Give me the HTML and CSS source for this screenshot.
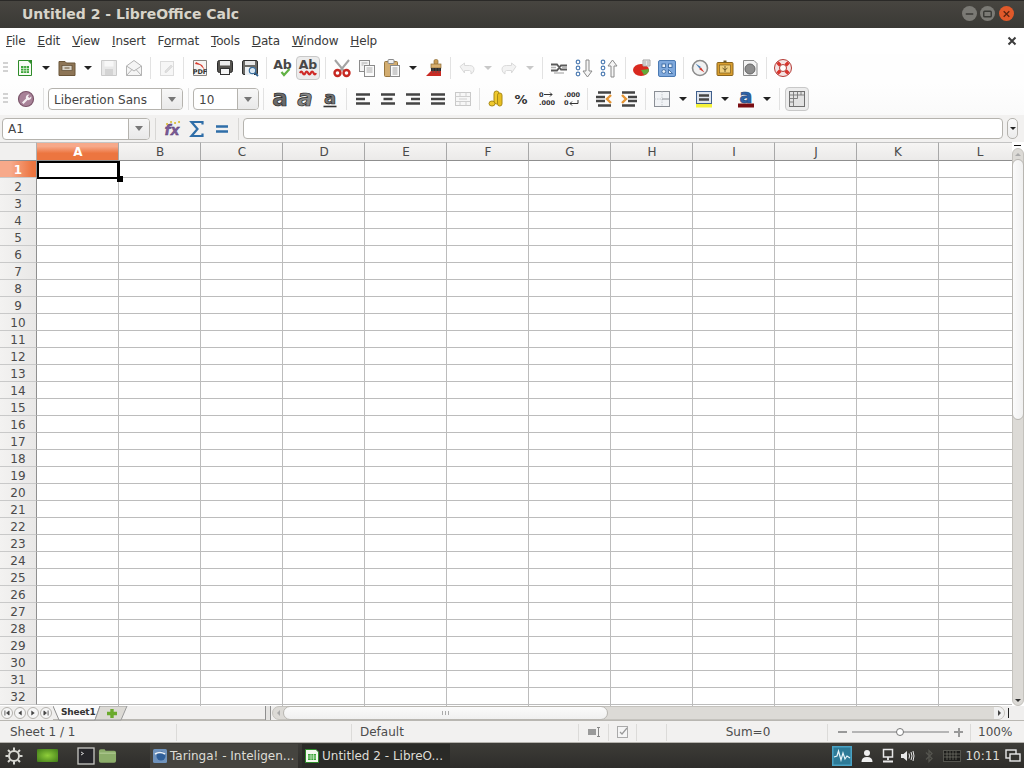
FILE: index.html
```html
<!DOCTYPE html>
<html lang="en">
<head>
    <meta charset="UTF-8">
    <title>Untitled 2 - LibreOffice Calc</title>
    <link rel="stylesheet" href="styles.css">
</head>
<body>

<div class="app">

    <!-- window title -->
    <div class="titlebar">
        <span class="title-text">Untitled 2 - LibreOffice Calc</span>
        <div class="win-buttons">
            <span class="win-btn"><svg width="16" height="16" viewBox="0 0 16 16"><path d="M4 8h8" stroke="#3a3a36" stroke-width="1.6"/></svg></span>
            <span class="win-btn"><svg width="16" height="16" viewBox="0 0 16 16"><rect x="4" y="5" width="8" height="6" rx="1" fill="none" stroke="#3a3a36" stroke-width="1.5"/></svg></span>
            <span class="win-btn win-close"><svg width="16" height="16" viewBox="0 0 16 16"><path d="M5 5l6 6M11 5l-6 6" stroke="#5a2410" stroke-width="1.4"/></svg></span>
        </div>
    </div>

    <!-- menu -->
    <div class="menubar">
        <span class="menu-item"><u>F</u>ile</span>
        <span class="menu-item"><u>E</u>dit</span>
        <span class="menu-item"><u>V</u>iew</span>
        <span class="menu-item"><u>I</u>nsert</span>
        <span class="menu-item">F<u>o</u>rmat</span>
        <span class="menu-item"><u>T</u>ools</span>
        <span class="menu-item"><u>D</u>ata</span>
        <span class="menu-item"><u>W</u>indow</span>
        <span class="menu-item"><u>H</u>elp</span>
        <svg class="menu-close" width="10" height="10" viewBox="0 0 10 10"><path d="M1.5 1.5l7 7M8.5 1.5l-7 7" stroke="#3c3c3c" stroke-width="2"/></svg>
    </div>

    <!-- standard toolbar -->
    <div class="toolbar toolbar-one">
        <span class="grip"></span>
        <span class="tool"><svg class="ic" viewBox="0 0 22 22"><path d="M4.5 3.500H14L17.500 7V18.500H4.500Z" fill="#f7fbf4" stroke="#2e8b2a"/><path d="M13.500 3L18 7.500V3Z" fill="#2e8b2a"/><rect x="7" y="9" width="8" height="7" fill="#3ba53a"/><path d="M7 11.500h8M7 13.800h8M9.700 9v7M12.400 9v7" stroke="#e6f5e0" stroke-width=".7"/></svg></span>
        <span class="arrow"></span>
        <span class="tool"><svg class="ic" viewBox="0 0 22 22"><path d="M3 4.500h6l1.500 1.500H19V18.500H3Z" fill="#8d7556" stroke="#6b5639"/><rect x="6" y="8.500" width="10" height="5" fill="#d8d3c8" stroke="#5e4c33" stroke-width=".7"/><path d="M8.500 11h5" stroke="#6b5639"/></svg></span>
        <span class="arrow"></span>
        <span class="tool"><svg class="ic" viewBox="0 0 22 22"><path d="M3.500 3.500H18.500V18.500H3.500Z" fill="#e8e8e8" stroke="#cacaca"/><rect x="6.500" y="4" width="9" height="5.500" fill="#f7f7f7"/><rect x="7" y="12" width="8" height="6" fill="#d4d4d4"/></svg></span>
        <span class="tool"><svg class="ic" viewBox="0 0 22 22"><path d="M3.500 9L11 3.500 18.500 9V18.500H3.500Z" fill="#f5f5f5" stroke="#b3b3b3"/><path d="M3.500 9L11 14l7.500-5M3.500 18.500L9 12.500M18.500 18.500L13 12.500" fill="none" stroke="#b3b3b3"/></svg></span>
        <span class="sep"></span>
        <span class="tool"><svg class="ic" viewBox="0 0 22 22"><rect x="4.500" y="4.500" width="13" height="14" fill="#f6f6f6" stroke="#dcdcdc"/><path d="M9 14l6-6 1.500 1.500-6 6H9Z" fill="#dedede" stroke="#cfcfcf" stroke-width=".5"/></svg></span>
        <span class="sep"></span>
        <span class="tool"><svg class="ic" viewBox="0 0 22 22"><path d="M4.500 3.500H17.500V18.500H4.500Z" fill="#f6f4f2" stroke="#8a8580"/><path d="M7 5l6 3 3 5-5-5-5-1Z" fill="#d8382a"/><text class="ic-pdf" x="11" y="17">PDF</text></svg></span>
        <span class="tool"><svg class="ic" viewBox="0 0 22 22"><rect x="3.500" y="3.500" width="15" height="12" rx="2" fill="#55534f" stroke="#2a2a2a"/><rect x="6" y="4" width="10" height="4.500" fill="#ececec"/><rect x="6.500" y="11.500" width="9" height="6" fill="#f5f5f5" stroke="#333"/></svg></span>
        <span class="tool"><svg class="ic" viewBox="0 0 22 22"><rect x="3.500" y="3.500" width="15" height="14" rx="1.500" fill="#6b6a66" stroke="#2f2f2f"/><rect x="6" y="4" width="10" height="4" fill="#e7e7e7"/><rect x="6" y="10" width="9" height="8" fill="#eef2f5"/><circle cx="13.500" cy="13.500" r="3.200" fill="#dbe8f3" stroke="#3b6f9e" stroke-width="1.200"/><path d="M16 16l3 3" stroke="#2f5f8c" stroke-width="1.800"/></svg></span>
        <span class="sep"></span>
        <span class="tool"><svg class="ic" viewBox="0 0 22 22"><text class="ic-ab" x="10.500" y="12">Ab</text><path d="M9.500 15l2.500 3 5.500-6" fill="none" stroke="#62b245" stroke-width="2.200"/></svg></span>
        <span class="tool tool-on"><svg class="ic" viewBox="0 0 22 22"><text class="ic-ab" x="11" y="12">Ab</text><path d="M3 16q1.300-3 2.700 0t2.700 0 2.700 0 2.700 0 2.700 0 2.400 0" fill="none" stroke="#cf2a27" stroke-width="2.200"/></svg></span>
        <span class="sep"></span>
        <span class="tool"><svg class="ic" viewBox="0 0 22 22"><path d="M4 3l9 11M18 3L9 14" stroke="#a3a3a3" stroke-width="2"/><circle cx="6.500" cy="16" r="3" fill="none" stroke="#c62821" stroke-width="2.400"/><circle cx="15.500" cy="16" r="3" fill="none" stroke="#c62821" stroke-width="2.400"/></svg></span>
        <span class="tool"><svg class="ic" viewBox="0 0 22 22"><rect x="3.500" y="3.500" width="10" height="11" fill="#f4f4f4" stroke="#8b8b8b"/><rect x="8.500" y="8.500" width="10" height="11" fill="#fbfbfb" stroke="#8b8b8b"/><path d="M5.500 6h6M5.500 8h2M10.500 11h6M10.500 13h6M10.500 15h6" stroke="#9a9a9a" stroke-width=".8"/></svg></span>
        <span class="tool"><svg class="ic" viewBox="0 0 22 22"><rect x="3.500" y="4.500" width="13" height="15" rx="1" fill="#d3ad70" stroke="#97763f"/><rect x="7" y="2.500" width="6" height="4" rx="1" fill="#f0f0f0" stroke="#8a8a8a"/><rect x="9.500" y="8.500" width="9" height="11" fill="#fbfbfb" stroke="#8b8b8b"/><path d="M11.500 11h5M11.500 13h5M11.500 15h5M11.500 17h5" stroke="#8b8b8b" stroke-width=".8"/></svg></span>
        <span class="arrow"></span>
        <span class="tool"><svg class="ic" viewBox="0 0 22 22"><g transform="translate(1 0)"><rect x="10" y="2.500" width="4" height="5" rx="1.500" fill="#c89b55" stroke="#8c6c35" stroke-width=".7"/><rect x="7" y="7" width="10" height="4" fill="#d9b070" stroke="#8c6c35" stroke-width=".7"/><path d="M7 11h10V18H7Z" fill="#2b2b2b"/><path d="M7 14l-5 5h15v-5Z" fill="#c92a23"/><path d="M9 11v5M12 11v5M15 11v5" stroke="#555" stroke-width=".8"/></g></svg></span>
        <span class="sep"></span>
        <span class="tool"><svg class="ic" viewBox="0 0 22 22"><path d="M4 9.500L8.500 6v2.500h5q4.500 0 4.500 4 0 3-3 4.500 1-3-1.500-3.500h-5V16Z" fill="#f3f3f3" stroke="#dadada"/></svg></span>
        <span class="arrow arrow-off"></span>
        <span class="tool"><svg class="ic" viewBox="0 0 22 22"><path d="M18 9.500L13.500 6v2.500h-5q-4.500 0-4.500 4 0 3 3 4.500-1-3 1.500-3.500h5V16Z" fill="#f3f3f3" stroke="#dadada"/></svg></span>
        <span class="arrow arrow-off"></span>
        <span class="sep"></span>
        <span class="tool"><svg class="ic" viewBox="0 0 22 22"><path d="M3 7.500h6l4 5h6M3 13.500h6l4-5h6" fill="none" stroke="#5a5a5a" stroke-width="1.800"/><path d="M3 10.500h5M14 10.500h5" stroke="#b5b5b5" stroke-width="1.500"/><path d="M6 16h10" stroke="#9a9a9a"/></svg></span>
        <span class="tool"><svg class="ic" viewBox="0 0 22 22"><circle cx="5" cy="5" r="1.800" fill="#fff" stroke="#4f7db3" stroke-width="1.200"/><circle cx="5" cy="11" r="1.800" fill="#fff" stroke="#4f7db3" stroke-width="1.200"/><circle cx="5" cy="17" r="1.800" fill="#fff" stroke="#4f7db3" stroke-width="1.200"/><path d="M13 3h3v11h3l-4.500 6L10 14h3Z" fill="#f5f5f5" stroke="#8a8a8a"/></svg></span>
        <span class="tool"><svg class="ic" viewBox="0 0 22 22"><circle cx="5" cy="5" r="1.800" fill="#fff" stroke="#4f7db3" stroke-width="1.200"/><circle cx="5" cy="11" r="1.800" fill="#fff" stroke="#4f7db3" stroke-width="1.200"/><circle cx="5" cy="17" r="1.800" fill="#fff" stroke="#4f7db3" stroke-width="1.200"/><path d="M13 20h3V9h3l-4.500-6L10 9h3Z" fill="#f5f5f5" stroke="#8a8a8a"/></svg></span>
        <span class="sep"></span>
        <span class="tool"><svg class="ic" viewBox="0 0 22 22"><ellipse cx="10" cy="13" rx="8" ry="6" fill="#d9291f"/><path d="M10 13l8-1a8 6 0 0 1-5 6Z" fill="#62a93a"/><path d="M12 3h7v6h-7Z" fill="#e6e6e6" stroke="#a5a5a5"/><path d="M13.500 5h1M16.500 5h1M13.500 7h1M16.500 7h1" stroke="#7a7a7a"/></svg></span>
        <span class="tool"><svg class="ic" viewBox="0 0 22 22"><rect x="2.500" y="3.500" width="17" height="16" rx="1.500" fill="#7ea8dc" stroke="#4b7ab3"/><rect x="6" y="7" width="3.500" height="3.500" fill="#eaf2fb" stroke="#2f5f99" stroke-width=".8"/><rect x="12.500" y="7" width="3.500" height="3.500" fill="#eaf2fb" stroke="#2f5f99" stroke-width=".8"/><circle cx="7.800" cy="14.500" r="1.900" fill="#eaf2fb" stroke="#2f5f99" stroke-width=".8"/><path d="M12.500 12.500v4h4Z" fill="#eaf2fb" stroke="#2f5f99" stroke-width=".8"/></svg></span>
        <span class="sep"></span>
        <span class="tool"><svg class="ic" viewBox="0 0 22 22"><circle cx="11" cy="11" r="7.500" fill="#f1f1f1" stroke="#8b8b8b" stroke-width="1.600"/><path d="M6.500 6.500l5.500 3.500-1.500 1.500Z" fill="#4a7fb5"/><path d="M15.500 15.500L10 12l2-1.500Z" fill="#d4352b"/></svg></span>
        <span class="tool"><svg class="ic" viewBox="0 0 22 22"><rect x="3" y="5.500" width="16" height="13" rx="1" fill="#d99e2f" stroke="#8a641c"/><rect x="5.500" y="8" width="11" height="8" fill="#efcf7e" stroke="#7c5c1e" stroke-width=".7"/><path d="M11 9v6M8.500 11l2.500 2 2.500-2" fill="none" stroke="#6e5a2b"/><path d="M9.500 3.500h3v2h-3Z" fill="#6e5a2b"/></svg></span>
        <span class="tool"><svg class="ic" viewBox="0 0 22 22"><path d="M4.500 3.500H15L18 6.500V18.500H4.500Z" fill="#f3f3f3" stroke="#8b8b8b"/><ellipse cx="11" cy="12" rx="5" ry="5" fill="#8e8e8e" stroke="#666"/></svg></span>
        <span class="sep"></span>
        <span class="tool"><svg class="ic" viewBox="0 0 22 22"><circle cx="11" cy="11" r="6" fill="none" stroke="#f4e3e3" stroke-width="5"/><path d="M5.500 5.500l3 3M16.500 5.500l-3 3M5.500 16.500l3-3M16.500 16.500l-3-3" stroke="#d8352d" stroke-width="3.400"/><circle cx="11" cy="11" r="8.500" fill="none" stroke="#b33a35"/><circle cx="11" cy="11" r="3.500" fill="#fff" stroke="#b33a35"/></svg></span>
    </div>

    <!-- formatting toolbar -->
    <div class="toolbar toolbar-two">
        <span class="grip grip-two"></span>
        <span class="tool"><svg class="ic" viewBox="0 0 22 22"><circle cx="11" cy="11" r="7.500" fill="#a88298" stroke="#7a5469" stroke-width="1.200"/><path d="M14.500 6.500a3 3 0 0 0-3.500 4L7 14.500l1.500 1.500 4-4a3 3 0 0 0 3.800-3.500l-2 1.500-1.500-1.500Z" fill="#f5eff2"/></svg></span>
        <span class="sep sep-thin"></span>
        <div class="combo combo-font">
            <span class="combo-text">Liberation Sans</span>
            <span class="combo-btn"></span>
        </div>
        <span class="sep sep-wide"></span>
        <div class="combo combo-size">
            <span class="combo-text">10</span>
            <span class="combo-btn"></span>
        </div>
        <span class="sep"></span>
        <span class="tool"><svg class="ic ic-tall" viewBox="0 -4 22 30"><text class="ic-a" x="11" y="17.500">a</text></svg></span>
        <span class="tool"><svg class="ic ic-tall" viewBox="0 -4 22 30"><text class="ic-a ic-a-italic" x="11" y="17.500">a</text></svg></span>
        <span class="tool"><svg class="ic ic-tall" viewBox="0 -4 22 30"><text class="ic-a ic-a-thin" x="11" y="15.500">a</text><path d="M4.500 18.500h13" stroke="#333" stroke-width="1.600"/></svg></span>
        <span class="sep"></span>
        <span class="tool"><svg class="ic" viewBox="0 0 22 22"><path d="M4 6.500h14M4 11h9M4 15.500h14" stroke="#444" stroke-width="2.600"/></svg></span>
        <span class="tool"><svg class="ic" viewBox="0 0 22 22"><path d="M4 6.500h14M6.500 11h9M4 15.500h14" stroke="#444" stroke-width="2.600"/></svg></span>
        <span class="tool"><svg class="ic" viewBox="0 0 22 22"><path d="M4 6.500h14M9 11h9M4 15.500h14" stroke="#444" stroke-width="2.600"/></svg></span>
        <span class="tool"><svg class="ic" viewBox="0 0 22 22"><path d="M4 6.500h14M4 11h14M4 15.500h14" stroke="#444" stroke-width="2.600"/></svg></span>
        <span class="tool"><svg class="ic" viewBox="0 0 22 22"><rect x="3.500" y="4.500" width="15" height="13" fill="#f7f7f7" stroke="#c9c9c9"/><path d="M3.500 8.500h15M3.500 13.500h15M8 4.500v4M14 4.500v4M8 13.500v4M14 13.500v4M7 11h8" stroke="#cfcfcf"/></svg></span>
        <span class="sep"></span>
        <span class="tool"><svg class="ic" viewBox="0 0 22 22"><rect x="9" y="3" width="5" height="13" rx="2.500" fill="#efc92e" stroke="#a98a14"/><rect x="12.500" y="5" width="4.500" height="13" rx="2.200" fill="#e8be1f" stroke="#a98a14"/><ellipse cx="7" cy="15.500" rx="3" ry="2.500" fill="#efc92e" stroke="#a98a14"/></svg></span>
        <span class="tool"><svg class="ic" viewBox="0 0 22 22"><text class="ic-pct" x="11" y="16">%</text></svg></span>
        <span class="tool"><svg class="ic" viewBox="0 0 22 22"><text class="ic-num" x="4" y="9">0</text><path d="M9 6.500h8m-2-2l2 2-2 2" fill="none" stroke="#333" stroke-width="1"/><text class="ic-num" x="4" y="17">.000</text></svg></span>
        <span class="tool"><svg class="ic" viewBox="0 0 22 22"><text class="ic-num" x="4" y="9">.000</text><text class="ic-num" x="4" y="17">0</text><path d="M18 12v3.500H10m2-2l-2 2 2 2" fill="none" stroke="#333" stroke-width="1"/></svg></span>
        <span class="sep"></span>
        <span class="tool"><svg class="ic" viewBox="0 0 22 22"><path d="M5 4.500h13M3 9h9M3 13h9M5 17.500h13" stroke="#444" stroke-width="2.400"/><path d="M18 7l-4 4 4 4" fill="none" stroke="#e59433" stroke-width="2.400"/></svg></span>
        <span class="tool"><svg class="ic" viewBox="0 0 22 22"><path d="M4 4.500h13M10 9h9M10 13h9M4 17.500h13" stroke="#444" stroke-width="2.400"/><path d="M4 7l4 4-4 4" fill="none" stroke="#e59433" stroke-width="2.400"/></svg></span>
        <span class="sep"></span>
        <span class="tool"><svg class="ic" viewBox="0 0 22 22"><rect x="3.500" y="3.500" width="15" height="15" fill="#f1f3f6" stroke="#8b8f96"/><path d="M11 3.500v15M3.500 11h7.500" stroke="#c4c8ce" stroke-dasharray="1.500 1"/><path d="M11 11h7.500" stroke="#8b8f96"/></svg></span>
        <span class="arrow"></span>
        <span class="tool"><svg class="ic" viewBox="0 0 22 22"><rect x="3.500" y="3.500" width="15" height="12" fill="#dfe5ee" stroke="#3f5f8c"/><path d="M6 7.500h10M6 11.500h10" stroke="#444" stroke-width="2.400"/><rect x="3" y="16" width="16" height="3.500" fill="#f4f23a"/></svg></span>
        <span class="arrow"></span>
        <span class="tool"><svg class="ic ic-tall" viewBox="0 -4 22 30"><text class="ic-a ic-a-blue" x="11" y="15">a</text><rect x="3" y="15.500" width="16" height="4" fill="#7a0d12"/></svg></span>
        <span class="arrow"></span>
        <span class="sep"></span>
        <span class="tool tool-on tool-side"><svg class="ic" viewBox="0 0 22 22"><rect x="3.500" y="3.500" width="15" height="15" fill="#e2e2e2" stroke="#6f6f6f"/><path d="M3.500 7h15M3.500 10.500h8M3.500 14h4M7.500 3.500v15M11.500 3.500v7M15 3.500v3.500" stroke="#777" stroke-width=".9"/></svg></span>
    </div>

    <!-- formula bar -->
    <div class="formulabar">
        <div class="namebox">
            <span class="combo-text">A1</span>
            <span class="combo-btn"></span>
        </div>
        <span class="sep"></span>
        <span class="tool"><svg class="ic" viewBox="0 0 22 22"><text class="ic-fx" x="11" y="17">fx</text><path d="M6 6h.1M10 4h.1M14 5h.1M18 4h.1" stroke="#d9bb32" stroke-width="2" stroke-linecap="round"/></svg></span>
        <span class="tool"><svg class="ic" viewBox="0 0 22 22"><path d="M16.500 6.500V4H5.500L11.500 11 5.500 18H16.500V15.500" fill="none" stroke="#2f6ea8" stroke-width="2.200"/></svg></span>
        <span class="tool"><svg class="ic" viewBox="0 0 22 22"><path d="M5 8.500h12M5 13.500h12" stroke="#2f6ea8" stroke-width="2.400"/></svg></span>
        <span class="sep"></span>
        <div class="formula-input"></div>
        <span class="formula-drop"></span>
    </div>

    <!-- sheet -->
    <div class="sheet">
        <div class="corner"></div>
        <div class="col-heads">
            <span class="col-head col-active">A</span>
            <span class="col-head">B</span>
            <span class="col-head">C</span>
            <span class="col-head">D</span>
            <span class="col-head">E</span>
            <span class="col-head">F</span>
            <span class="col-head">G</span>
            <span class="col-head">H</span>
            <span class="col-head">I</span>
            <span class="col-head">J</span>
            <span class="col-head">K</span>
            <span class="col-head col-last">L</span>
        </div>
        <div class="vscroll">
            <span class="vs-dash"></span>
            <div class="vs-trough">
                <span class="vs-up"></span>
                <span class="vs-thumb"></span>
                <span class="vs-rest"></span>
                <span class="vs-down"></span>
            </div>
        </div>
        <div class="row-heads">
            <span class="row-head row-active">1</span>
            <span class="row-head">2</span>
            <span class="row-head">3</span>
            <span class="row-head">4</span>
            <span class="row-head">5</span>
            <span class="row-head">6</span>
            <span class="row-head">7</span>
            <span class="row-head">8</span>
            <span class="row-head">9</span>
            <span class="row-head">10</span>
            <span class="row-head">11</span>
            <span class="row-head">12</span>
            <span class="row-head">13</span>
            <span class="row-head">14</span>
            <span class="row-head">15</span>
            <span class="row-head">16</span>
            <span class="row-head">17</span>
            <span class="row-head">18</span>
            <span class="row-head">19</span>
            <span class="row-head">20</span>
            <span class="row-head">21</span>
            <span class="row-head">22</span>
            <span class="row-head">23</span>
            <span class="row-head">24</span>
            <span class="row-head">25</span>
            <span class="row-head">26</span>
            <span class="row-head">27</span>
            <span class="row-head">28</span>
            <span class="row-head">29</span>
            <span class="row-head">30</span>
            <span class="row-head">31</span>
            <span class="row-head">32</span>
        </div>
        <div class="cells">
            <div class="cell-cursor"><span class="cell-handle"></span></div>
        </div>
    </div>

    <!-- sheet tabs and horizontal scrollbar -->
    <div class="tabbar">
        <div class="tab-nav">
            <span class="nav-btn"><svg width="12" height="12" viewBox="0 0 12 12"><path d="M3.500 3v6M8.500 3.500L5.500 6l3 2.500Z" fill="#444" stroke="#444"/></svg></span>
            <span class="nav-btn"><svg width="12" height="12" viewBox="0 0 12 12"><path d="M8 3L4 6l4 3Z" fill="#444"/></svg></span>
            <span class="nav-btn"><svg width="12" height="12" viewBox="0 0 12 12"><path d="M4 3l4 3-4 3Z" fill="#444"/></svg></span>
            <span class="nav-btn"><svg width="12" height="12" viewBox="0 0 12 12"><path d="M8.500 3v6M3.500 3.500L6.500 6l-3 2.500Z" fill="#444" stroke="#444"/></svg></span>
        </div>
        <div class="tabs">
            <svg class="tab-shape" width="78" height="15" viewBox="0 0 78 15"><path d="M0 0l6 14H42L47 0" fill="#fafafa" stroke="#8f8f8f"/><path d="M47 0l-5 14H68L74 0Z" fill="#dcdad5" stroke="#9a9a9a"/><path d="M54 7.500h10M59 3v9" stroke="#6aaa2c" stroke-width="3.400"/></svg>
            <span class="tab-name">Sheet1</span>
        </div>
        <span class="tab-split"></span>
        <div class="hscroll">
            <span class="hs-left"></span>
            <span class="hs-thumb"><span class="hs-grip"></span></span>
            <span class="hs-right"></span>
        </div>
        <span class="hs-dash"></span>
    </div>

    <!-- status bar -->
    <div class="statusbar">
        <span class="st st-sheet">Sheet 1 / 1</span>
        <span class="st st-style">Default</span>
        <span class="st st-select"><svg width="14" height="12" viewBox="0 0 14 12"><rect x="1" y="3" width="8" height="6" fill="#9a9a9a"/><path d="M10 1.500h3M11.500 1.500v9M10 10.500h3" stroke="#888" fill="none"/></svg></span>
        <span class="st st-doc"><svg width="14" height="14" viewBox="0 0 14 14"><rect x="1.500" y="1.500" width="10" height="11" fill="#f5f5f5" stroke="#aaa"/><path d="M4 7l2 2 5-6" fill="none" stroke="#999" stroke-width="1.200"/></svg></span>
        <span class="st st-blank"></span>
        <span class="st st-sum">Sum=0</span>
        <span class="st st-zoom">
            <span class="zoom-minus"></span>
            <span class="zoom-track"><span class="zoom-knob"></span></span>
            <span class="zoom-plus"></span>
        </span>
        <span class="st st-pct">100%</span>
    </div>

    <!-- desktop panel -->
    <div class="panel">
        <svg class="panel-gear" width="20" height="20" viewBox="0 0 20 20"><circle cx="10" cy="10" r="5" fill="none" stroke="#d8d8d2" stroke-width="2"/><path d="M10 1.500v3M10 15.500v3M1.500 10h3M15.500 10h3M4 4l2 2M14 14l2 2M16 4l-2 2M6 14l-2 2" stroke="#d8d8d2" stroke-width="2"/></svg>
        <span class="panel-desk"></span>
        <svg class="panel-term" width="18" height="18" viewBox="0 0 18 18"><rect x="1" y="1" width="16" height="16" fill="#26262a" stroke="#c8c8c4" stroke-width="1.300"/><path d="M4 5l2.500 1.500L4 8" fill="none" stroke="#e8e8e8" stroke-width=".9"/></svg>
        <svg class="panel-folder" width="19" height="16" viewBox="0 0 20 16"><path d="M1 3q0-2 2-2h4l1 1.500h9q2 0 2 2V13q0 2-2 2H3q-2 0-2-2Z" fill="#8cad6a"/><path d="M1.500 5h17" stroke="#b8d09c"/></svg>
        <div class="task task-one">
            <svg width="16" height="16" viewBox="0 0 16 16"><rect x="1" y="1" width="14" height="14" rx="1.500" fill="#6f93bd"/><circle cx="9" cy="8" r="4.500" fill="#2f5f99"/><path d="M3 6q5-3 10 0" fill="none" stroke="#eef3f8" stroke-width="1.500"/></svg>
            <span>Taringa! - Inteligen...</span>
        </div>
        <div class="task task-two">
            <svg width="16" height="16" viewBox="0 0 16 16"><path d="M1.500 1.500H12L14.500 4V14.500H1.500Z" fill="#f3f8ef" stroke="#2e8b2a"/><rect x="4" y="6" width="8" height="6" fill="#3ba53a"/><path d="M4 8h8M4 10h8M7 6v6M9.500 6v6" stroke="#e6f5e0" stroke-width=".6"/></svg>
            <span>Untitled 2 - LibreO...</span>
        </div>
        <div class="tray">
            <svg class="tray-mon" width="20" height="20" viewBox="0 0 20 20"><rect x="0" y="0" width="20" height="20" fill="#4aa3c4"/><rect x="1.500" y="1.500" width="17" height="17" fill="#2d7a97"/><path d="M2 11l3-1 1.500-5L9 14l2-7 2 6 2-3 3 2" fill="none" stroke="#e8f6fb" stroke-width="1.200"/></svg>
            <svg class="tray-user" width="14" height="14" viewBox="0 0 14 14"><circle cx="7" cy="4" r="3" fill="#efefef"/><path d="M1.500 13q0-5 5.500-5t5.500 5Z" fill="#efefef"/></svg>
            <svg class="tray-net" width="14" height="16" viewBox="0 0 14 16"><rect x="2.500" y="1.500" width="9" height="7.500" fill="none" stroke="#e8e8e8" stroke-width="1.500"/><path d="M7 9v3M2 13.500h10" stroke="#e8e8e8" stroke-width="1.800"/></svg>
            <svg class="tray-vol" width="15" height="14" viewBox="0 0 15 14"><path d="M1 5h2.500L7 2v10L3.500 9H1Z" fill="#e8e8e8"/><path d="M9 4.500q1 2.500 0 5M11 3q2 4 0 8M13 2q2 5 0 10" fill="none" stroke="#e8e8e8"/></svg>
            <svg class="tray-bt" width="10" height="16" viewBox="0 0 10 16"><path d="M2 4.500l6 6L5 13.500V2.500l3 3-6 6" fill="none" stroke="#55554f" stroke-width="1.300"/></svg>
            <svg class="tray-kb" width="18" height="12" viewBox="0 0 18 12"><rect x=".5" y=".5" width="17" height="11" fill="#1c1c1a" stroke="#55554f"/><path d="M1 4h16M1 7h16M4 1v9M7 1v9M10 1v9M13 1v9" stroke="#77776f" stroke-width=".7"/></svg>
            <span class="clock">10:11</span>
            <svg class="tray-win" width="16" height="14" viewBox="0 0 16 14"><rect x="1" y="1" width="10" height="8" fill="#33332f" stroke="#e8e8e8" stroke-width="1.400"/><rect x="5" y="5" width="10" height="7" fill="#33332f" stroke="#e8e8e8" stroke-width="1.400"/></svg>
        </div>
    </div>

</div>

</body>
</html>
```

FILE: styles.css
```css
* {
    box-sizing: border-box;
}

html, body {
    margin: 0;
    height: 768px;
    overflow: hidden;
}

body {
    font-family: "DejaVu Sans", sans-serif;
    font-size: 12px;
    color: #3c3c3c;
    background: #f2f1f0;
}

.app {
    display: flex;
    flex-direction: column;
    width: 1024px;
    height: 768px;
}

/* title bar */
.titlebar {
    display: flex;
    align-items: center;
    justify-content: space-between;
    flex: 0 0 28px;
    padding: 0 0 2px 22px;
    background: linear-gradient(#474540, #3a3935);
    border-top: 1px solid #2a2927;
}
.title-text {
    font-size: 14px;
    font-weight: bold;
    color: #d8d4ca;
}
.win-buttons {
    display: flex;
    gap: 3px;
    padding-right: 10px;
}
.win-btn {
    display: flex;
    align-items: center;
    justify-content: center;
    width: 15px;
    height: 15px;
    border-radius: 50%;
    background: #7b7a75;
}
.win-close {
    background: #e0592a;
    margin-left: 1px;
}

/* menu */
.menubar {
    display: flex;
    align-items: center;
    flex: 0 0 26px;
    background: #fff;
    padding-right: 7px;
}
.menu-item {
    padding: 0 6px;
    font-size: 12px;
    letter-spacing: -0.15px;
    color: #3a3a3a;
}
.menu-close {
    margin-left: auto;
}

/* toolbars */
.toolbar {
    display: flex;
    align-items: center;
}
.toolbar-one {
    flex: 0 0 29px;
    padding-bottom: 1px;
    background: #fefefe;
}
.toolbar-two {
    flex: 0 0 32px;
    background: linear-gradient(#fefefe, #fafafa);
}
.toolbar-two .combo-text {
    padding-top: 4px;
}
.grip {
    flex: 0 0 12px;
    height: 12px;
    background: repeating-linear-gradient(#d2d2d2 0 2px, transparent 2px 4px) 3px 0 / 5px 100% no-repeat;
}
.grip-two {
    flex: 0 0 13px;
}
.tool {
    display: flex;
    align-items: center;
    justify-content: center;
    flex: 0 0 25px;
    height: 24px;
}
.tool-on {
    flex: 0 0 23px;
    margin: 0 1px;
    border: 1px solid #c8c8c8;
    border-radius: 4px;
    background: #ececec;
}
.tool-side {
    margin-left: 2px;
}
.ic {
    flex: none;
    width: 22px;
    height: 22px;
}
.ic-tall {
    height: 30px;
}
.ic text {
    font-family: "DejaVu Sans", sans-serif;
    text-anchor: middle;
}
.ic .ic-num {
    font-size: 6.5px;
    font-weight: bold;
    fill: #333;
    text-anchor: start;
}
.ic-pdf {
    font-size: 6.5px;
    font-weight: bold;
    fill: #333;
}
.ic-ab {
    font-size: 12.5px;
    font-weight: bold;
    fill: #474747;
}
.ic-a {
    font-size: 23px;
    font-weight: bold;
    fill: #6a6a6a;
    stroke: #222;
    stroke-width: .7px;
}
.ic-a-italic {
    font-style: italic;
    fill: #888;
}
.ic-a-thin {
    font-size: 18px;
    fill: #777;
}
.ic-a-blue {
    font-size: 19px;
    fill: #2f63a8;
    stroke: #234a80;
}
.ic-pct {
    font-size: 13px;
    font-weight: bold;
    fill: #333;
}
.ic-fx {
    font-size: 14px;
    font-weight: bold;
    font-style: italic;
    fill: #7b5a96;
    stroke: #4c3064;
    stroke-width: .3px;
}
.arrow {
    display: flex;
    align-items: center;
    justify-content: center;
    flex: 0 0 17px;
}
.arrow::before {
    content: "";
    border-top: 4px solid #222;
    border-left: 4px solid transparent;
    border-right: 4px solid transparent;
}
.arrow-off::before {
    border-top-color: #c8c8c8;
}
.sep {
    flex: 0 0 8px;
    height: 22px;
    background: linear-gradient(#e2e2e2, #e2e2e2) center / 1px 100% no-repeat;
}
.sep-thin {
    flex: 0 0 10px;
}
.sep-wide {
    flex: 0 0 10px;
}

/* combos */
.combo, .namebox {
    display: flex;
    align-items: stretch;
    height: 22px;
    background: #fff;
    border: 1px solid #b5b3ae;
    border-radius: 4px;
    color: #444;
}
.combo-font {
    flex: 0 0 135px;
}
.combo-size {
    flex: 0 0 66px;
}
.combo-text {
    flex: 1;
    padding: 3px 0 0 5px;
}
.combo-btn {
    display: flex;
    align-items: center;
    justify-content: center;
    width: 21px;
    background: linear-gradient(#f7f7f7, #e9e9e9);
    border-left: 1px solid #b5b3ae;
    border-radius: 0 3px 3px 0;
}
.combo-btn::before {
    content: "";
    border-top: 5px solid #777;
    border-left: 4px solid transparent;
    border-right: 4px solid transparent;
}

/* formula bar */
.formulabar {
    display: flex;
    align-items: center;
    flex: 0 0 27px;
    padding: 0 6px 0 2px;
    background: #f2f1f0;
}
.namebox {
    flex: 0 0 148px;
    margin-right: 1px;
}
.formulabar .sep {
    background-image: linear-gradient(#d8d7d5, #d8d7d5);
}
.formula-input {
    flex: 0 0 760px;
    height: 21px;
    margin-left: 1px;
    background: #fff;
    border: 1px solid #b5b3ae;
    border-radius: 4px;
}
.formula-drop {
    display: flex;
    align-items: center;
    justify-content: center;
    width: 11px;
    height: 21px;
    margin-left: 4px;
    background: linear-gradient(#fafafa, #ececec);
    border: 1px solid #b5b3ae;
    border-radius: 5px;
}
.formula-drop::before {
    content: "";
    border-top: 3px solid #222;
    border-left: 3px solid transparent;
    border-right: 3px solid transparent;
}

/* sheet */
.sheet {
    display: grid;
    grid-template-columns: 37px 975px 12px;
    grid-template-rows: 19px 545px;
    flex: 0 0 564px;
    background: #fff;
}
.corner {
    background: #f1f0ef;
    border-right: 1px solid #b0b0b0;
    border-bottom: 1px solid #8f8f8f;
    border-top: 1px solid #c4c4c4;
}
.col-heads {
    display: flex;
}
.col-head {
    flex: 0 0 82px;
    display: flex;
    align-items: center;
    justify-content: center;
    padding-left: 1px;
    background: linear-gradient(#f6f5f4, #ebeae9);
    border-top: 1px solid #c4c4c4;
    border-right: 1px solid #a8a8a8;
    border-bottom: 1px solid #8f8f8f;
    color: #4a4a4a;
}
.col-last {
    flex: 0 0 81px;
    border-right: 0;
}
.col-active {
    background: linear-gradient(#f7a98a 0, #f7a98a 20%, #ec7540 60%, #ec7540);
    color: #fff;
    font-weight: bold;
}
.vscroll {
    grid-column: 3;
    grid-row: 1 / 3;
    display: flex;
    flex-direction: column;
    background: #fff;
}
.vs-dash {
    flex: 0 0 6px;
    background: linear-gradient(#111, #111) 2px 3px / 7px 1px no-repeat;
}
.vs-trough {
    flex: 1;
    display: flex;
    flex-direction: column;
    background: #dcdad6;
    border: 1px solid #c4c2bd;
    border-radius: 6px;
}
.vs-up, .vs-down {
    flex: 0 0 10px;
    display: flex;
    align-items: center;
    justify-content: center;
}
.vs-up::before {
    content: "";
    border-bottom: 3px solid #aaa;
    border-left: 3px solid transparent;
    border-right: 3px solid transparent;
}
.vs-down::before {
    content: "";
    border-top: 3px solid #333;
    border-left: 3px solid transparent;
    border-right: 3px solid transparent;
}
.vs-thumb {
    flex: 0 0 261px;
    background: linear-gradient(to right, #fbfbfb, #f0f0f0);
    border: 1px solid #b8b6b1;
    border-radius: 6px;
    margin: 0 -1px;
}
.vs-rest {
    flex: 1;
}
.row-heads {
    display: flex;
    flex-direction: column;
    overflow: hidden;
}
.row-head {
    flex: 0 0 17px;
    display: flex;
    align-items: center;
    justify-content: center;
    padding-top: 1px;
    background: linear-gradient(to right, #f3f2f1, #e9e8e7);
    border-right: 1px solid #8f8f8f;
    border-bottom: 1px solid #c9c9c9;
    color: #4a4a4a;
}
.row-active {
    background: linear-gradient(to right, #f7a98a 30%, #ec7540 90%);
    color: #fff;
    font-weight: bold;
}
.cells {
    position: relative;
    background:
        repeating-linear-gradient(to right, transparent 0 81px, #bcbcbc 81px 82px),
        repeating-linear-gradient(to bottom, transparent 0 16px, #bcbcbc 16px 17px);
    background-color: #fff;
}
.cell-cursor {
    position: absolute;
    left: 0;
    top: 0;
    width: 83px;
    height: 18px;
    border: 2px solid #000;
    border-right-width: 3px;
}
.cell-handle {
    position: absolute;
    right: -6px;
    bottom: -5px;
    width: 6px;
    height: 6px;
    background: #000;
}

/* tabs */
.tabbar {
    display: flex;
    align-items: stretch;
    flex: 0 0 15px;
    background: #f0efee;
    border-bottom: 1px solid #b9b7b2;
}
.tab-nav {
    display: flex;
    flex: 0 0 53px;
    padding-left: 1px;
    gap: 1px;
}
.nav-btn {
    display: flex;
    align-items: center;
    justify-content: center;
    width: 12px;
    height: 12px;
    margin-top: 1px;
    border: 1px solid #b5b3ae;
    border-radius: 50%;
    background: #f6f6f6;
}
.tabs {
    position: relative;
    flex: 0 0 212px;
    border-bottom: 1px solid #b9b7b2;
}
.tab-shape {
    position: absolute;
    left: 0;
    top: 0;
}
.tab-name {
    position: absolute;
    left: 8px;
    top: 1px;
    font-size: 9px;
    letter-spacing: -0.2px;
    font-weight: bold;
    color: #333;
}
.tab-split {
    flex: 0 0 6px;
    border-left: 1px solid #8f8f8f;
    border-right: 1px solid #8f8f8f;
    background: #e4e3e1;
}
.hscroll {
    display: flex;
    flex: 0 0 733px;
    margin-left: 1px;
    height: 14px;
    background: #dcdad6;
    border: 1px solid #c4c2bd;
    border-radius: 7px;
}
.hs-left, .hs-right {
    display: flex;
    align-items: center;
    justify-content: center;
    flex: 0 0 10px;
}
.hs-left::before {
    content: "";
    border-right: 3px solid #aaa;
    border-top: 3px solid transparent;
    border-bottom: 3px solid transparent;
}
.hs-right {
    margin-left: auto;
    background: #f0f0f0;
    border-radius: 0 6px 6px 0;
}
.hs-right::before {
    content: "";
    border-left: 3px solid #444;
    border-top: 3px solid transparent;
    border-bottom: 3px solid transparent;
}
.hs-thumb {
    display: flex;
    align-items: center;
    justify-content: center;
    flex: 0 0 325px;
    margin: -1px 0;
    background: linear-gradient(#fbfbfb, #f0f0f0);
    border: 1px solid #b8b6b1;
    border-radius: 7px;
}
.hs-grip {
    width: 7px;
    height: 4px;
    background: repeating-linear-gradient(to right, #aaa 0 1px, transparent 1px 3px);
}
.hs-dash {
    flex: 0 0 1px;
    margin: 2px 0 2px 3px;
    background: #222;
}

/* status bar */
.statusbar {
    display: flex;
    align-items: center;
    flex: 0 0 21px;
    padding-top: 1px;
    background: #f2f1f0;
    color: #4c4c4c;
}
.st {
    display: flex;
    align-items: center;
    height: 17px;
    border-right: 1px solid #dcdbd9;
}
.st-sheet {
    flex: 0 0 177px;
    padding-left: 10px;
}
.st-style {
    flex: 0 0 228px;
    padding-left: 8px;
    margin-left: 174px;
    border-left: 1px solid #dcdbd9;
}
.st-select {
    flex: 0 0 30px;
    justify-content: center;
}
.st-doc {
    flex: 0 0 28px;
    justify-content: center;
}
.st-blank {
    flex: 0 0 30px;
}
.st-sum {
    flex: 0 0 161px;
    justify-content: center;
    padding-left: 2px;
}
.st-zoom {
    position: relative;
    flex: 0 0 143px;
    padding-left: 10px;
}
.st-pct {
    flex: 1;
    padding-left: 7px;
    border-right: 0;
}
.zoom-minus, .zoom-plus {
    position: relative;
    width: 9px;
    height: 2px;
    background: #999;
}
.zoom-plus::after {
    content: "";
    position: absolute;
    left: 3.5px;
    top: -3.5px;
    width: 2px;
    height: 9px;
    background: #999;
}
.zoom-track {
    position: relative;
    width: 97px;
    height: 2px;
    margin: 0 5px;
    background: #b5b5b5;
}
.zoom-knob {
    position: absolute;
    left: 44px;
    top: -3px;
    width: 8px;
    height: 8px;
    border-radius: 50%;
    background: #fff;
    border: 1px solid #777;
}

/* desktop panel */
.panel {
    display: flex;
    align-items: center;
    flex: 0 0 26px;
    background: linear-gradient(#3d3c38, #2e2d2a);
    border-top: 1px solid #b5b3ae;
    color: #dedcd6;
}
.panel-gear {
    margin-left: 4px;
}
.panel-desk {
    flex: 0 0 21px;
    height: 13px;
    margin-left: 13px;
    border-radius: 1px;
    background: radial-gradient(#8fce3a, #3f7a18);
}
.panel-term {
    margin-left: 19px;
}
.panel-folder {
    margin-left: 3px;
}
.task {
    display: flex;
    align-items: center;
    gap: 2px;
    flex: 0 0 148px;
    height: 24px;
    padding-left: 2px;
    font-size: 12px;
    white-space: nowrap;
}
.task-one {
    margin-left: 33px;
    background: #45443f;
}
.task-two {
    margin-left: 4px;
    background: #2a2a27;
}
.tray {
    display: flex;
    align-items: center;
    margin-left: auto;
}
.tray-user {
    margin-left: 8px;
}
.tray-net {
    margin-left: 7px;
}
.tray-vol {
    margin-left: 5px;
}
.tray-bt {
    margin-left: 9px;
}
.tray-kb {
    margin-left: 9px;
}
.clock {
    margin-left: 4px;
    font-size: 12px;
    color: #dedcd6;
}
.tray-win {
    margin: 0 3px 0 5px;
}
```
